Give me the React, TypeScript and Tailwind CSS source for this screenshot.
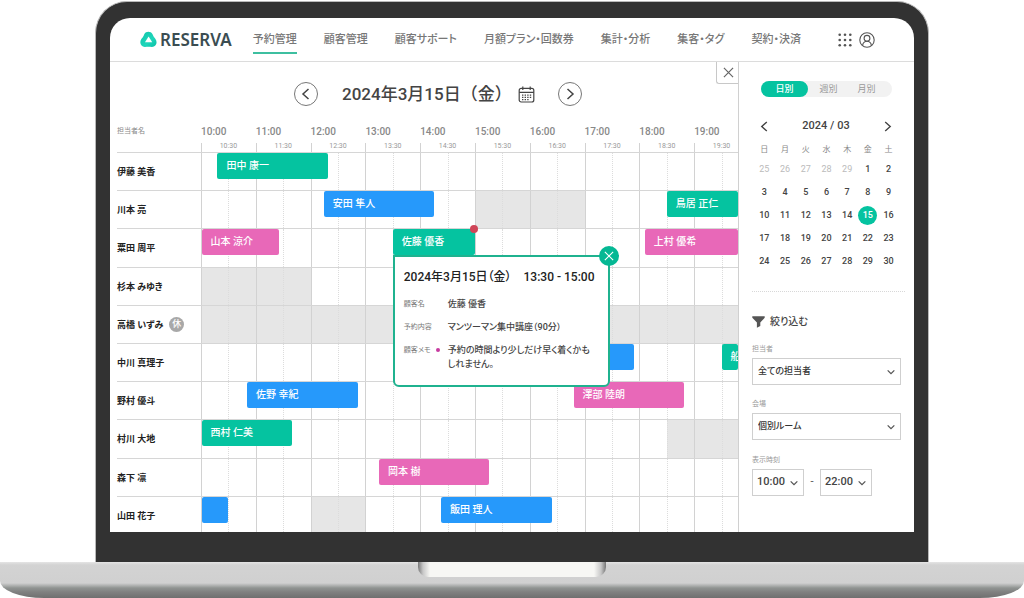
import { ReactNode } from "react";

type Tone = "green" | "blue" | "pink";
type Booking = { name: string; start: number; end: number; tone: Tone; detail?: boolean };
type Staff = {
  name: string;
  off?: boolean;
  closed?: [number, number];
  bookings: Booking[];
};

// Hours are counted from 10:00; the track shows a little under ten of them.
const VISIBLE_HOURS = 9.8;
const HOURS = [0, 1, 2, 3, 4, 5, 6, 7, 8, 9];

const TONES: Record<Tone, string> = {
  green: "bg-[#05c3a0]",
  blue: "bg-[#2699fb]",
  pink: "bg-[#e868b8]",
};

const STAFF: Staff[] = [
  { name: "伊藤 美香", bookings: [{ name: "田中 康一", start: 0.3, end: 2.31, tone: "green" }] },
  {
    name: "川本 亮",
    closed: [5, 7],
    bookings: [
      { name: "安田 隼人", start: 2.24, end: 4.26, tone: "blue" },
      { name: "鳥居 正仁", start: 8.5, end: 10.5, tone: "green" },
    ],
  },
  {
    name: "粟田 周平",
    bookings: [
      { name: "山本 涼介", start: 0.01, end: 1.43, tone: "pink" },
      { name: "佐藤 優香", start: 3.5, end: 5, tone: "green", detail: true },
      { name: "上村 優希", start: 8.1, end: 10.1, tone: "pink" },
    ],
  },
  { name: "杉本 みゆき", closed: [0, 2], bookings: [] },
  { name: "高橋 いずみ", off: true, closed: [0, 10], bookings: [] },
  {
    name: "中川 真理子",
    bookings: [
      { name: "", start: 6, end: 7.91, tone: "blue" },
      { name: "船", start: 9.5, end: 11, tone: "green" },
    ],
  },
  {
    name: "野村 優斗",
    bookings: [
      { name: "佐野 幸紀", start: 0.84, end: 2.86, tone: "blue" },
      { name: "澤部 陸朗", start: 6.8, end: 8.82, tone: "pink" },
    ],
  },
  {
    name: "村川 大地",
    closed: [8.5, 10],
    bookings: [{ name: "西村 仁美", start: 0.01, end: 1.66, tone: "green" }],
  },
  { name: "森下 凛", bookings: [{ name: "岡本 樹", start: 3.25, end: 5.26, tone: "pink" }] },
  {
    name: "山田 花子",
    closed: [2, 3],
    bookings: [
      { name: "", start: 0.01, end: 0.5, tone: "blue" },
      { name: "飯田 理人", start: 4.38, end: 6.4, tone: "blue" },
    ],
  },
];

const NAV = ["予約管理", "顧客管理", "顧客サポート", "月額プラン・回数券", "集計・分析", "集客・タグ", "契約・決済"];
const WEEKDAYS = ["日", "月", "火", "水", "木", "金", "土"];
const WEEKS = [
  [25, 26, 27, 28, 29, 1, 2],
  [3, 4, 5, 6, 7, 8, 9],
  [10, 11, 12, 13, 14, 15, 16],
  [17, 18, 19, 20, 21, 22, 23],
  [24, 25, 26, 27, 28, 29, 30],
];

const at = (h: number) => `${(Math.min(h, VISIBLE_HOURS) / VISIBLE_HOURS) * 100}%`;
const span = (from: number, to: number) => ({
  left: at(from),
  width: `${((Math.min(to, VISIBLE_HOURS) - from) / VISIBLE_HOURS) * 100}%`,
});

function Chevron({ d, className }: { d: string; className: string }) {
  return (
    <svg viewBox="0 0 12 12" className={className} fill="none" stroke="currentColor" strokeWidth="1.5" aria-hidden="true">
      <path d={d} />
    </svg>
  );
}
const LEFT = "M8.5 1 L3 6 L8.5 11";
const RIGHT = "M3.5 1 L9 6 L3.5 11";
const DOWN = "M2 4 L6 8 L10 4";

function Cross({ className }: { className: string }) {
  return (
    <svg viewBox="0 0 12 12" className={className} fill="none" stroke="currentColor" strokeWidth="1.3" aria-hidden="true">
      <path d="M1 1 L11 11 M11 1 L1 11" />
    </svg>
  );
}

function Logo() {
  return (
    <a href="#" className="flex items-center gap-[3px] text-[#3b4d52]">
      <svg viewBox="0 0 17 17" className="size-[17px]" aria-hidden="true">
        <defs>
          <linearGradient id="mark" x1="0" y1="0" x2="1" y2="1">
            <stop offset="0" stopColor="#10c4a8" />
            <stop offset="0.6" stopColor="#1fd6bb" />
            <stop offset="1" stopColor="#08bfa4" />
          </linearGradient>
        </defs>
        <path
          d="M4.4 3 C5.8 0 10.9 0 12.4 3 C13 4.8 14 6.4 15.3 7.8 C18 11.4 16 16 12 16 C9.6 15.6 7.4 15.6 5 16 C1 16.2 -1.2 11.6 1.5 7.8 C2.9 6.4 3.8 4.8 4.4 3 Z"
          fill="url(#mark)"
        />
        <path d="M8.6 5.4 L12.2 11.2 H5 Z" fill="#fff" />
      </svg>
      <span className="font-['Noto_Sans'] text-[17px] leading-5 font-semibold">RESERVA</span>
    </a>
  );
}

function TopBar() {
  return (
    <header className="flex h-11 shrink-0 items-center border-b border-[#dcdcdc] pr-[39px] pl-[30px]">
      <Logo />
      <nav className="ml-[21px] flex h-full items-center gap-[27px]">
        {NAV.map((item, i) => (
          <a
            key={item}
            href="#"
            className={
              i === 0
                ? "border-b-2 border-[#3dbfa0] pt-[5px] pb-[2px] text-[11px] leading-5 font-medium whitespace-nowrap text-[#777]"
                : "border-b-2 border-transparent pt-[5px] pb-[2px] text-[11px] leading-5 font-medium whitespace-nowrap text-[#777]"
            }
          >
            {item}
          </a>
        ))}
      </nav>
      <div className="ml-auto flex items-center gap-[7px] text-[#555]">
        <button type="button" aria-label="メニュー">
          <svg viewBox="0 0 14 14" className="size-3.5" fill="currentColor" aria-hidden="true">
            {[1.7, 7, 12.3].map((y) => [1.7, 7, 12.3].map((x) => <circle key={`${x}-${y}`} cx={x} cy={y} r="1.3" />))}
          </svg>
        </button>
        <button type="button" aria-label="アカウント">
          <svg viewBox="0 0 16 16" className="size-4" fill="none" stroke="currentColor" strokeWidth="1.1" aria-hidden="true">
            <circle cx="8" cy="8" r="7.2" />
            <circle cx="8" cy="6.3" r="2.9" />
            <path d="M3.6 13.4 C4 10.8 5.4 9.3 8 9.3 C10.6 9.3 12 10.8 12.4 13.4" />
          </svg>
        </button>
      </div>
    </header>
  );
}

function DetailRow({ label, dot, children }: { label: string; dot?: boolean; children: ReactNode }) {
  return (
    <>
      <dt className="flex items-center gap-[5px] self-start text-[7px] leading-[14px] text-[#777]">
        {label}
        {dot && <span className="size-1 rounded-full bg-[#c73aa0]" />}
      </dt>
      <dd className="text-[9px] leading-[14px] font-medium text-[#444]">{children}</dd>
    </>
  );
}

function BookingDetail() {
  return (
    <div
      role="dialog"
      aria-label="予約詳細"
      className="absolute top-[26px] left-0 z-10 w-[217px] rounded-b-md rounded-tr-md border-2 border-[#1fb28f] bg-white px-[9px] pt-3 pb-3.5 text-left"
    >
      <p className="flex gap-3 text-[12px] leading-4 font-medium whitespace-nowrap text-[#222]">
        <span>2024年3月15日（金）</span>
        <span>13:30 - 15:00</span>
      </p>
      <dl className="mt-3 grid grid-cols-[44px_1fr] gap-y-[9px] whitespace-nowrap">
        <DetailRow label="顧客名">佐藤 優香</DetailRow>
        <DetailRow label="予約内容">マンツーマン集中講座（90分）</DetailRow>
        <DetailRow label="顧客メモ" dot>
          予約の時間より少しだけ早く着くかも
          <br />
          しれません。
        </DetailRow>
      </dl>
      <button
        type="button"
        aria-label="閉じる"
        className="absolute -top-[11px] -right-[11px] grid size-5 place-items-center rounded-full bg-[#05b894] text-white"
      >
        <Cross className="size-2.5" />
      </button>
    </div>
  );
}

function Track({ staff }: { staff: Staff }) {
  return (
    <td className="relative border-t border-[#d6d6d6] p-0">
      {staff.closed && (
        <span className="absolute inset-y-0 bg-[#e6e6e6]" style={span(staff.closed[0], staff.closed[1])} />
      )}
      {HOURS.map((h) => (
        <span key={h} className="absolute inset-y-0 w-px bg-[#d2d2d2]" style={{ left: at(h) }} />
      ))}
      {HOURS.map((h) => (
        <span
          key={h}
          className="absolute inset-y-0 w-0 border-l border-dotted border-[#dcdcdc]"
          style={{ left: at(h + 0.5) }}
        />
      ))}
      {staff.bookings.map((b) => (
        <div
          key={b.start}
          className={`absolute top-0 h-[26px] rounded-xs ${TONES[b.tone]}`}
          style={span(b.start, b.end)}
        >
          <button
            type="button"
            aria-label={b.name || "予約"}
            className="block size-full overflow-hidden pl-[9px] text-left text-[10px] leading-[26px] font-medium whitespace-nowrap text-white"
          >
            {b.name}
          </button>
          {b.detail && (
            <>
              <BookingDetail />
              <span className="absolute -top-1 -right-[3px] size-2 rounded-full bg-[#cf4558]" />
            </>
          )}
        </div>
      ))}
    </td>
  );
}

function Schedule() {
  return (
    <main className="relative min-w-0 flex-1 overflow-hidden border-r border-[#d0d0d0] pt-5 pl-[7px]">
      <div className="flex items-center pl-[177px] text-[#444]">
        <button type="button" aria-label="前の日" className="grid size-6 place-items-center rounded-full border border-[#777]">
          <Chevron d={LEFT} className="size-3" />
        </button>
        <h1 className="ml-6 pt-px text-[17px] leading-[23px] font-medium whitespace-nowrap [font-feature-settings:normal]">
          2024年3月15日（金）
        </h1>
        <button type="button" aria-label="カレンダー" className="ml-[6px]">
          <svg viewBox="0 0 17 17" className="size-[17px]" fill="none" stroke="currentColor" strokeWidth="1.2" aria-hidden="true">
            <rect x="1.2" y="2.4" width="14.6" height="13.6" rx="2" />
            <path d="M1.2 6.4 H15.8 M4.8 0.4 V4 M12.2 0.4 V4" />
            <path d="M4 9.2 H13.4 M4 11.4 H13.4 M4 13.6 H11" strokeDasharray="1.4 1.2" />
          </svg>
        </button>
        <button type="button" aria-label="次の日" className="ml-[23px] grid size-6 place-items-center rounded-full border border-[#777]">
          <Chevron d={RIGHT} className="size-3" />
        </button>
      </div>

      <table className="h-[428px] w-full table-fixed border-separate border-spacing-0">
        <thead>
          <tr className="h-[46px]">
            <th scope="col" className="w-[84px] p-0 pt-[18px] text-left align-top text-[7px] leading-[14px] font-normal text-[#888]">
              担当者名
            </th>
            <th className="relative p-0 font-normal" aria-label="時刻">
              {HOURS.map((h) => (
                <span key={h}>
                  <span className="absolute top-[19px] text-[10px] leading-[14px] font-medium text-[#888]" style={{ left: at(h) }}>
                    {h + 10}:00
                  </span>
                  <span className="absolute bottom-0 h-[9px] w-px bg-[#d2d2d2]" style={{ left: at(h) }} />
                  <span
                    className="absolute top-9 -translate-x-1/2 text-[7px] leading-2 text-[#999]"
                    style={{ left: at(h + 0.5) }}
                  >
                    {h + 10}:30
                  </span>
                </span>
              ))}
            </th>
          </tr>
        </thead>
        <tbody>
          {STAFF.map((s) => (
            <tr key={s.name}>
              <th
                scope="row"
                className="border-t border-[#d6d6d6] p-0 pt-px text-left align-middle text-[9px] leading-4 font-bold whitespace-nowrap text-[#222]"
              >
                <span className="flex items-center gap-1.5">
                  {s.name}
                  {s.off && (
                    <span className="grid size-[15px] place-items-center rounded-full bg-[#a8a8a8] text-[9px] leading-none font-medium text-white">
                      休
                    </span>
                  )}
                </span>
              </th>
              <Track staff={s} />
            </tr>
          ))}
        </tbody>
      </table>

      <button
        type="button"
        aria-label="パネルを閉じる"
        className="absolute top-0 -right-px grid h-[22px] w-[23px] place-items-center rounded-bl-[3px] border-b border-l border-[#c8c8c8] bg-white text-[#666]"
      >
        <Cross className="size-[11px]" />
      </button>
    </main>
  );
}

function Picker({ id, value, time }: { id: string; value: string; time?: boolean }) {
  return (
    <div className={time ? "grid w-[52px] items-center" : "grid items-center"}>
      <select
        id={id}
        defaultValue={value}
        aria-label={time ? value : undefined}
        className={
          time
            ? "col-start-1 row-start-1 h-[27px] w-full appearance-none border border-[#cfcfcf] bg-white pl-1 text-[11px] font-medium text-[#444]"
            : "col-start-1 row-start-1 h-[27px] w-full appearance-none border border-[#cfcfcf] bg-white pl-[5px] text-[9px] font-medium text-[#333]"
        }
      >
        <option>{value}</option>
      </select>
      <Chevron
        d={DOWN}
        className="pointer-events-none col-start-1 row-start-1 mr-[5px] size-[10px] justify-self-end text-[#555]"
      />
    </div>
  );
}

function Sidebar() {
  return (
    <aside className="w-[175px] shrink-0 overflow-hidden pt-[19px] pr-[13px] pl-[13px]">
      <div className="mr-[9px] ml-[9px] flex h-4 rounded-full bg-[#f2f2f2] text-[9px] leading-4 text-[#999]">
        <button type="button" className="w-[47px] rounded-full bg-[#05c3a0] font-medium text-white">
          日別
        </button>
        <button type="button" className="w-[41px]">
          週別
        </button>
        <button type="button" className="w-[35px]">
          月別
        </button>
      </div>

      <div className="mt-[21px] flex items-center justify-between pr-2 pl-[7px] text-[#444]">
        <button type="button" aria-label="前の月">
          <Chevron d={LEFT} className="size-[11px]" />
        </button>
        <h2 className="text-[11px] leading-4 font-medium">2024 / 03</h2>
        <button type="button" aria-label="次の月">
          <Chevron d={RIGHT} className="size-[11px]" />
        </button>
      </div>

      <table className="mt-2 ml-[2px] w-[145px] table-fixed border-separate border-spacing-0 text-center text-[9px] text-[#444]">
        <thead>
          <tr>
            {WEEKDAYS.map((d) => (
              <th key={d} scope="col" className="p-0 text-[8px] leading-4 font-normal text-[#888]">
                {d}
              </th>
            ))}
          </tr>
        </thead>
        <tbody>
          {WEEKS.map((week, w) => (
            <tr key={w} className="h-[23px]">
              {week.map((day) => {
                const outside = w === 0 && day > 20;
                const selected = w === 2 && day === 15;
                return (
                  <td key={day} className="p-0">
                    <button
                      type="button"
                      className={
                        selected
                          ? "mx-auto grid size-[19px] place-items-center rounded-full bg-[#05c3a0] font-medium text-white"
                          : outside
                            ? "mx-auto grid size-[19px] place-items-center text-[#bbb]"
                            : "mx-auto grid size-[19px] place-items-center font-medium"
                      }
                    >
                      {day}
                    </button>
                  </td>
                );
              })}
            </tr>
          ))}
        </tbody>
      </table>

      <hr className="mt-[18px] -mr-1 border-t border-dotted border-[#d8d8d8]" />

      <h2 className="mt-[22px] flex items-center gap-[5px] text-[10px] leading-4 font-medium text-[#444]">
        <svg viewBox="0 0 13 12" className="h-3 w-[13px]" fill="#555" aria-hidden="true">
          <path d="M0.3 0.3 H12.7 V1.8 L8.3 6.6 V10 L4.9 11.8 V6.6 L0.3 1.8 Z" />
        </svg>
        絞り込む
      </h2>
      <label htmlFor="staff" className="mt-[13px] mb-[3px] block text-[7px] leading-[12px] text-[#999]">
        担当者
      </label>
      <Picker id="staff" value="全ての担当者" />
      <label htmlFor="room" className="mt-[13px] mb-[3px] block text-[7px] leading-[12px] text-[#999]">
        会場
      </label>
      <Picker id="room" value="個別ルーム" />
      <label htmlFor="from" className="mt-[14px] mb-[3px] block text-[7px] leading-[12px] text-[#999]">
        表示時刻
      </label>
      <div className="flex items-center text-[11px] text-[#555]">
        <Picker id="from" value="10:00" time />
        <span className="w-4 text-center">-</span>
        <Picker id="to" value="22:00" time />
      </div>
    </aside>
  );
}

export default function App() {
  return (
    <div className="flex h-screen flex-col overflow-hidden bg-white pt-px font-[Roboto,'Noto_Sans_CJK_JP',sans-serif] [font-feature-settings:'palt']">
      <div className="mx-[95px] flex min-h-0 flex-1 flex-col rounded-t-[32px] border-x border-t border-[#b9b9b9] bg-[#323232] px-3.5 pt-4 pb-[30px]">
        <div className="flex min-h-0 flex-1 flex-col overflow-hidden rounded-t-[20px] bg-white">
          <TopBar />
          <div className="flex min-h-0 flex-1">
            <Schedule />
            <Sidebar />
          </div>
        </div>
      </div>
      <div className="flex h-9 shrink-0 justify-center [background-image:linear-gradient(#e4e4e4_0,#d3d3d3_3px,#d0d0d0_21px,#8f9391_26px,#808080_30px,#6f6f6f_36px)] [border-radius:0_0_44px_44px/0_0_17px_17px]">
        <div className="h-[15px] w-[188px] rounded-b-[10px] [background-image:linear-gradient(90deg,#777_0,#c8c8c8_5px,#f7f7f4_12px,#f7f7f4_176px,#c8c8c8_183px,#777_188px)]" />
      </div>
    </div>
  );
}
